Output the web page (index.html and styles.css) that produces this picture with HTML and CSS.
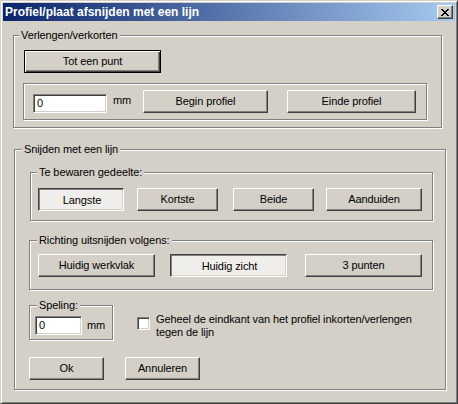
FILE: index.html
```html
<!DOCTYPE html>
<html>
<head>
<meta charset="utf-8">
<link rel="stylesheet" href="styles.css">
</head>
<body>
<div class="window">
  <div class="titlebar">
    <span class="title">Profiel/plaat afsnijden met een lijn</span>
    <button class="close" aria-label="Sluiten">
      <svg width="8" height="7" viewBox="0 0 8 7" shape-rendering="crispEdges">
        <path d="M0 0h2v1h-2z M6 0h2v1h-2z M1 1h2v1h-2z M5 1h2v1h-2z M2 2h4v1h-4z M3 3h2v1h-2z M2 4h4v1h-4z M1 5h2v1h-2z M5 5h2v1h-2z M0 6h2v1h-2z M6 6h2v1h-2z" fill="#000"/>
      </svg>
    </button>
  </div>
  <div class="body">
    <fieldset class="group g1">
      <legend class="lg1">Verlengen/verkorten</legend>
      <div class="inner in1">
        <button class="btn default btn-tot">Tot een punt</button>
        <div class="etched row1">
          <div class="edit e1">0</div>
          <span class="unit u1">mm</span>
          <button class="btn b-begin">Begin profiel</button>
          <button class="btn b-einde">Einde profiel</button>
        </div>
      </div>
    </fieldset>

    <fieldset class="group g2">
      <legend class="lg2">Snijden met een lijn</legend>
      <div class="inner in2">
        <fieldset class="group g-bewaren">
          <legend class="lg-sub">Te bewaren gedeelte:</legend>
          <div class="btnrow r-bewaren">
            <button class="btn pressed b-langste">Langste</button>
            <button class="btn b-kortste">Kortste</button>
            <button class="btn b-beide">Beide</button>
            <button class="btn b-aanduiden">Aanduiden</button>
          </div>
        </fieldset>

        <fieldset class="group g-richting">
          <legend class="lg-sub2">Richting uitsnijden volgens:</legend>
          <div class="btnrow r-richting">
            <button class="btn b-werkvlak">Huidig werkvlak</button>
            <button class="btn pressed b-zicht">Huidig zicht</button>
            <button class="btn b-punten">3 punten</button>
          </div>
        </fieldset>

        <div class="row3">
          <fieldset class="group g-speling">
            <legend class="lg-sub2">Speling:</legend>
            <div class="speling-row">
              <div class="edit e2">0</div>
              <span class="unit u2">mm</span>
            </div>
          </fieldset>
          <span class="checkbox"></span>
          <span class="cblabel">Geheel de eindkant van het profiel inkorten/verlengen<br>tegen de lijn</span>
        </div>

        <div class="actions">
          <button class="btn b-ok">Ok</button>
          <button class="btn b-annuleren">Annuleren</button>
        </div>
      </div>
    </fieldset>
  </div>
</div>
</body>
</html>
```

FILE: styles.css
```css
html, body {
  margin: 0;
  padding: 0;
  background: #d4d0c8;
}

body {
  font-family: "Liberation Sans", Arial, sans-serif;
  font-size: 11px;
  line-height: 13px;
  letter-spacing: -0.1px;
  color: #000;
}

.window {
  width: 458px;
  height: 404px;
  box-sizing: border-box;
  background: #d4d0c8;
  border: 1px solid;
  border-color: #d4d0c8 #404040 #404040 #d4d0c8;
  box-shadow: inset 1px 1px 0 #fff, inset -1px -1px 0 #808080;
  padding: 2px;
  display: flex;
  flex-direction: column;
}

.titlebar {
  height: 18px;
  flex: none;
  display: flex;
  align-items: flex-start;
  background: linear-gradient(to right, #0a246a, #a6caf0);
}

.title {
  color: #fff;
  font-weight: bold;
  font-size: 12px;
  line-height: 18px;
  letter-spacing: 0;
  padding-left: 2px;
  white-space: nowrap;
}

.close {
  margin: 2px 2px 0 auto;
  width: 16px;
  height: 14px;
  padding: 0;
  box-sizing: border-box;
  background: #d4d0c8;
  border: 1px solid;
  border-color: #fff #404040 #404040 #fff;
  box-shadow: inset -1px -1px 0 #808080;
  display: flex;
  align-items: center;
  justify-content: center;
}

.close svg {
  display: block;
}

.body {
  padding: 8px 0 0 10px;
}

/* group boxes */
.group {
  margin: 0;
  padding: 0;
  min-width: 0;
  box-sizing: border-box;
  border: 1px solid #808080;
  box-shadow: 1px 1px 0 #fff, inset 1px 1px 0 #fff;
}

.group > legend {
  padding: 0 2px;
  height: 13px;
  line-height: 13px;
  background: #d4d0c8;
  white-space: nowrap;
}

.etched {
  box-sizing: border-box;
  border: 1px solid #808080;
  box-shadow: 1px 1px 0 #fff, inset 1px 1px 0 #fff;
}

.g1 {
  width: 429px;
  height: 99px;
}
.lg1 { margin-left: 5px; }

.in1 { padding-top: 8px; }

/* buttons */
.btn {
  font: inherit;
  letter-spacing: inherit;
  color: #000;
  margin: 0;
  padding: 0;
  box-sizing: border-box;
  height: 23px;
  background: #d4d0c8;
  border: 1px solid;
  border-color: #fff #404040 #404040 #fff;
  box-shadow: inset -1px -1px 0 #808080;
  display: flex;
  align-items: center;
  justify-content: center;
  white-space: nowrap;
  flex: none;
}

.btn.default {
  border-color: #000;
  box-shadow: inset 1px 1px 0 #fff, inset -1px -1px 0 #404040, inset -2px -2px 0 #808080;
}

.btn.pressed {
  background: #f0eeea;
  border-color: #404040 #fff #fff #404040;
  box-shadow: inset 1px 1px 0 #808080, inset -1px -1px 0 #d4d0c8;
  padding: 2px 0 0 2px;
}

.btn-tot {
  width: 137px;
  margin-left: 10px;
}

.row1 {
  margin: 10px 0 0 9px;
  width: 404px;
  height: 37px;
  display: flex;
  align-items: flex-start;
}

/* edit fields */
.edit {
  box-sizing: border-box;
  height: 19px;
  background: #fff;
  border: 1px solid;
  border-color: #808080 #fff #fff #808080;
  box-shadow: inset 1px 1px 0 #404040, inset -1px -1px 0 #d4d0c8;
  padding: 2px 0 0 3px;
  line-height: 13px;
  flex: none;
}

.e1 {
  width: 74px;
  margin: 10px 0 0 9px;
}

.unit { flex: none; }

.u1 {
  width: 30px;
  margin: 10px 0 0 6px;
}

.b-begin {
  width: 125px;
  margin-top: 6px;
}

.b-einde {
  width: 129px;
  margin: 6px 0 0 19px;
}

/* group 2 */
.g2 {
  margin-top: 15px;
  margin-left: 1px;
  width: 432px;
  height: 247px;
}
.lg2 { margin-left: 7px; }

.in2 { padding-top: 10px; }

.g-bewaren {
  margin-left: 15px;
  width: 403px;
  height: 55px;
}
.lg-sub { margin-left: 6px; }
.lg-sub2 { margin-left: 7px; }

.btnrow {
  display: flex;
  align-items: flex-start;
}

.r-bewaren { padding-top: 9px; }

.b-langste { width: 86px; margin-left: 7px; }
.b-kortste { width: 81px; margin-left: 13px; }
.b-beide { width: 81px; margin-left: 15px; }
.b-aanduiden { width: 96px; margin-left: 12px; }

.g-richting {
  margin: 13px 0 0 14px;
  width: 404px;
  height: 56px;
}

.r-richting { padding-top: 7px; }

.b-werkvlak { width: 117px; margin-left: 8px; }
.b-zicht { width: 117px; margin-left: 15px; }
.b-punten { width: 117px; margin-left: 18px; }

.row3 {
  margin-top: 9px;
  display: flex;
  align-items: flex-start;
}

.g-speling {
  margin-left: 14px;
  width: 84px;
  height: 41px;
  flex: none;
}

.speling-row {
  display: flex;
  align-items: flex-start;
}

.e2 {
  width: 47px;
  margin: 4px 0 0 5px;
}

.u2 {
  margin: 7px 0 0 5px;
}

.checkbox {
  flex: none;
  box-sizing: border-box;
  width: 13px;
  height: 13px;
  margin: 18px 0 0 24px;
  background: #fff;
  border: 1px solid;
  border-color: #808080 #fff #fff #808080;
  box-shadow: inset 1px 1px 0 #404040, inset -1px -1px 0 #d4d0c8;
}

.cblabel {
  margin: 14px 0 0 6px;
  white-space: nowrap;
}

.actions {
  margin-top: 17px;
  display: flex;
  align-items: flex-start;
}

.b-ok { width: 75px; margin-left: 14px; }
.b-annuleren { width: 75px; margin-left: 21px; }
```
